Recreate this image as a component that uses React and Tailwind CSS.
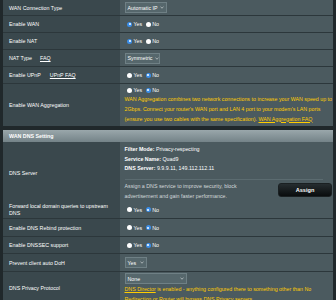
import React from 'react';

const Radio = ({ checked }) =>
  checked ? (
    <span className="w-[5px] h-[5px] rounded-full bg-[#3b8ee8] flex items-center justify-center shrink-0">
      <span className="w-[2px] h-[2px] rounded-full bg-white" />
    </span>
  ) : (
    <span className="w-[5px] h-[5px] rounded-full bg-white shrink-0" />
  );

const YesNo = ({ value }) => (
  <div className="flex items-center pl-[2.5px] h-[8px]">
    <Radio checked={value} />
    <span className="ml-[1.5px]">Yes</span>
    <span className="ml-[3.5px] flex">
      <Radio checked={!value} />
    </span>
    <span className="ml-[1.5px]">No</span>
  </div>
);

const Chevron = () => (
  <svg width="4" height="3" viewBox="0 0 4 3" className="shrink-0">
    <polyline points="0.5,0.8 2,2.2 3.5,0.8" fill="none" stroke="#e5e9ea" strokeWidth="0.6" />
  </svg>
);

const Select = ({ label, className }) => (
  <div
    className={`flex items-center justify-between gap-[2px] h-[11px] pl-[2px] pr-[2px] bg-[#56676c] border border-[#6f8085] ${className}`}
  >
    <span className="whitespace-nowrap">{label}</span>
    <Chevron />
  </div>
);

const Row = ({ label, h, border = true, labelClass = '', valueClass = '', children }) => (
  <div className={`grid grid-cols-[117px_1fr] ${h} ${border ? 'border-b border-[#2c373b]' : ''}`}>
    <div className={`bg-[#3a484d] flex items-center pl-[6px] pr-[6px] ${labelClass}`}>{label}</div>
    <div className={`bg-[#4b5a5f] flex pl-[4.5px] ${valueClass}`}>{children}</div>
  </div>
);

const Link = ({ children }) => <span className="underline underline-offset-[1px]">{children}</span>;

export default function App() {
  return (
    <div className="w-[336px] h-[300px] overflow-hidden bg-[#20282b] px-[3px] font-['Liberation_Sans',Arial,sans-serif] text-[5.3px] leading-[8px] text-white">
      <Row label="WAN Connection Type" h="h-[16px]" valueClass="items-center">
        <Select label="Automatic IP" className="w-[42px]" />
      </Row>
      <Row label="Enable WAN" h="h-[17px]" valueClass="items-center">
        <YesNo value={true} />
      </Row>
      <Row label="Enable NAT" h="h-[17px]" valueClass="items-center">
        <YesNo value={true} />
      </Row>
      <Row
        label={
          <>
            <span>NAT Type</span>
            <span className="ml-[8px]">
              <Link>FAQ</Link>
            </span>
          </>
        }
        h="h-[17px]"
        valueClass="items-center"
      >
        <Select label="Symmetric" className="w-[35px]" />
      </Row>
      <Row
        label={
          <>
            <span>Enable UPnP</span>
            <span className="ml-[9px]">
              <Link>UPnP FAQ</Link>
            </span>
          </>
        }
        h="h-[17px]"
        valueClass="items-center"
      >
        <YesNo value={false} />
      </Row>
      <Row label="Enable WAN Aggregation" h="h-[42px]" border={false} valueClass="flex-col pt-[2px]">
        <YesNo value={false} />
        <div className="text-[#ffcc00] leading-[10px] -mt-[0.5px] whitespace-nowrap">
          WAN Aggregation combines two network connections to increase your WAN speed up to
          <br />
          2Gbps. Connect your router's WAN port and LAN 4 port to your modem's LAN ports
          <br />
          (ensure you use two cables with the same specification). <Link>WAN Aggregation FAQ</Link>
        </div>
      </Row>

      <div className="h-[4px]" />
      <div className="h-[12px] flex items-center pl-[6px] font-bold bg-gradient-to-b from-[#9aa7ab] to-[#748388]">
        WAN DNS Setting
      </div>

      <Row label="DNS Server" h="h-[59px]" labelClass="pt-[3px]" valueClass="flex-col pt-[3px] pr-[1px]">
        <div className="leading-[9.7px]">
          <div>
            <span className="font-bold">Filter Mode:</span> Privacy-respecting
          </div>
          <div>
            <span className="font-bold">Service Name:</span> Quad9
          </div>
          <div>
            <span className="font-bold">DNS Server:</span> 9.9.9.11, 149.112.112.11
          </div>
        </div>
        <div className="mt-[4.5px] h-px w-[198px] bg-[#5b6b70]" />
        <div className="flex items-start mt-px">
          <div className="leading-[10px] text-[#d3d9db] whitespace-nowrap">
            Assign a DNS service to improve security, block
            <br />
            advertisement and gain faster performance.
          </div>
          <button className="ml-auto mt-[2px] w-[54px] h-[14px] rounded-[3px] bg-gradient-to-b from-[#262d30] to-[#0a0d0e] border border-[#1a2022] text-white font-bold text-[5.6px] flex items-center justify-center">
            Assign
          </button>
        </div>
      </Row>
      <Row
        label={
          <span className="leading-[7px] pt-[1px]">
            Forward local domain queries to upstream
            <br />
            DNS
          </span>
        }
        h="h-[18px]"
        valueClass="items-center"
      >
        <YesNo value={false} />
      </Row>
      <Row label="Enable DNS Rebind protection" h="h-[18px]" valueClass="items-center">
        <YesNo value={false} />
      </Row>
      <Row label="Enable DNSSEC support" h="h-[17px]" valueClass="items-center">
        <YesNo value={false} />
      </Row>
      <Row label="Prevent client auto DoH" h="h-[18px]" valueClass="items-center">
        <Select label="Yes" className="w-[22px]" />
      </Row>
      <Row label="DNS Privacy Protocol" h="h-[32px]" border={false} valueClass="flex-col pt-[1px]">
        <Select label="None" className="w-[62px] h-[10px]" />
        <div className="text-[#ffcc00] leading-[10px] whitespace-nowrap">
          <Link>DNS Director</Link> is enabled - anything configured there to something other than No
          <br />
          Redirection or Router will bypass DNS Privacy servers.
        </div>
      </Row>
    </div>
  );
}
